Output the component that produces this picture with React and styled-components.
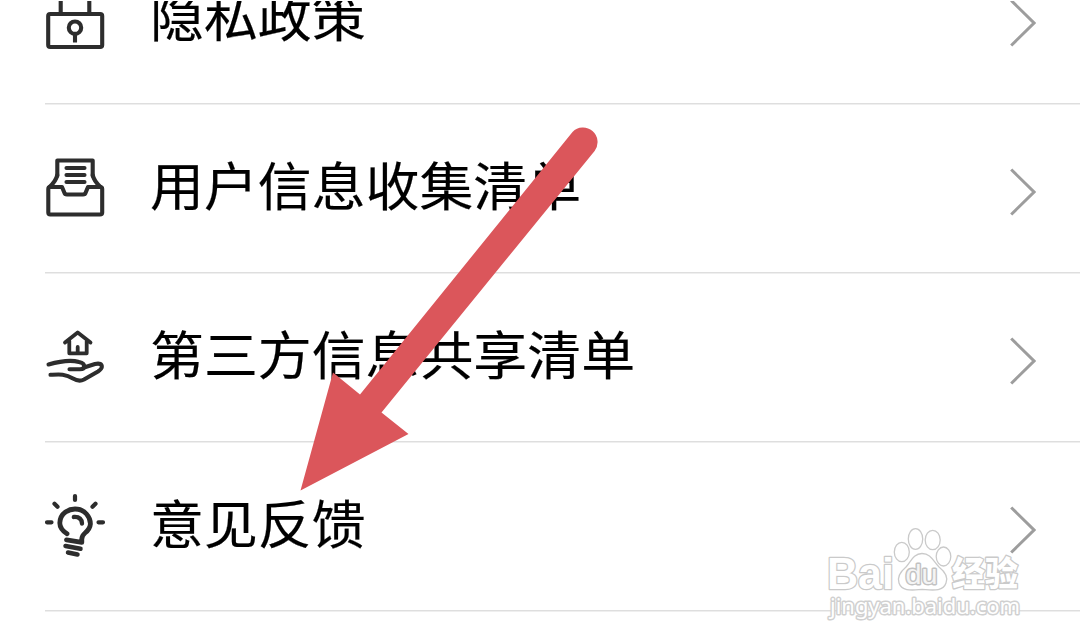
import React from "react";
import styled, { createGlobalStyle } from "styled-components";

const GlobalStyle = createGlobalStyle`
  html, body { margin: 0; background: #fff; }
  body { font-family: "Noto Sans CJK SC", sans-serif; }
`;

const Screen = styled.main`
  position: relative;
  box-sizing: border-box;
  width: 1080px;
  height: 644px;
  padding-top: 1px;
  background: #fff;
  overflow: hidden;
`;

const Viewport = styled.div`
  height: 643px;
  overflow: hidden;
`;

const List = styled.ul`
  list-style: none;
  margin: -65px 0 0;
  padding: 0 0 0 45px;
`;

const Row = styled.li`
  box-sizing: border-box;
  display: flex;
  align-items: center;
  height: 169px;
  padding-right: 44px;
  border-bottom: 1px solid #efefef;
  box-shadow: inset 0 -1px #dedede;
`;

const Icon = styled.svg`
  flex: none;
  width: 60px;
  height: 72px;
  margin: 0 45px 2px 0;
  overflow: visible;
  fill: none;
  stroke: #2d2d2d;
  stroke-width: 4.1;
  stroke-linejoin: round;
  stroke-linecap: round;
`;

const Label = styled.span`
  flex: 1;
  margin-bottom: 10px;
  font-size: 53.9px;
  line-height: 80px;
  color: #000;
  -webkit-text-stroke: 0.2px #000;
  white-space: nowrap;
  transform: scaleY(0.96);
`;

const Chevron = styled.svg`
  flex: none;
  width: 26px;
  height: 48px;
  margin-top: 6px;
  fill: none;
  stroke: #9d9d9d;
  stroke-width: 3;
`;

const Arrow = styled.svg`
  position: absolute;
  left: 290px;
  top: 120px;
  width: 320px;
  height: 380px;
  fill: #db565b;
`;

const Watermark = styled.svg`
  position: absolute;
  left: 820px;
  top: 520px;
  width: 210px;
  height: 110px;
  fill: #fff;
  stroke: #cacaca;
  stroke-width: 1.3;
`;

const LatinMark = styled.text`
  font-family: "Liberation Sans", sans-serif;
  font-weight: 700;
  paint-order: stroke;
  stroke-width: 2.6;
  stroke-linejoin: round;
`;

const PawMark = styled(LatinMark)`
  font-weight: 400;
  fill: #f4f4f4;
  stroke: #c2c2c2;
  stroke-width: 2.8;
`;

const HanMark = styled(LatinMark)`
  font-family: "Noto Sans CJK SC", sans-serif;
  font-weight: 900;
`;

const UrlMark = styled(LatinMark)`
  font-family: "Noto Sans", sans-serif;
  font-weight: 400;
  stroke: #d0d0d0;
  stroke-width: 3;
`;

const LockIcon = () => (
  <>
    <rect x="3.2" y="31" width="54" height="33" rx="2" />
    <path d="M15.7 31V8H44.3V31" />
    <circle cx="30" cy="44.7" r="6.2" />
    <path d="M30 51v8.5" strokeLinecap="butt" />
  </>
);

const TrayIcon = () => (
  <>
    <path d="M12.3 24V8.5H47.7V24" />
    <path d="M12.3 23Q11 29 4.5 35M47.7 23Q49 29 55.5 35" />
    <path d="M5 35H17L19.3 40.5Q19.8 42.5 22 42.5H38Q40.2 42.5 40.7 40.5L43 35H55Q57.2 35 57.2 37V60.5Q57.2 62.5 55 62.5H5.2Q3.3 62.5 3.3 60.5V37Q3.3 35 5 35Z" />
    <path d="M21.5 16H39.5M21.5 23H39.5M21.5 30H39.5" />
  </>
);

const HandHouseIcon = () => (
  <>
    <path d="M20 21.5L32.7 11.5L45.5 21.5M24.3 20V32.3H41.7V20M32.7 31V26" strokeWidth="3.8" />
    <path d="M3.5 43.5C14 40.5 25 38.5 34 41Q39.5 42 39 45.5Q39 48.3 35 48.3H24.5" />
    <path d="M39 46.5L50 43Q57 41.5 56.8 46Q56.7 48 53 50.5L39 58.5Q34 61.2 28 57.5C20 52.5 14 53.3 5.5 53.8" />
  </>
);

const BulbIcon = () => (
  <>
    <path d="M22 43.8C17 40.5 14.8 37 14.8 33Q15 26 20.5 22Q25 19 30 19Q37 19 41.5 24Q45.5 28.5 45.4 34Q45 39 40 43Q37 45.5 36.8 49V52.4L21.5 49.8" strokeWidth="4.8" />
    <path d="M28.8 27Q36.5 26.5 37 33.5" strokeWidth="4.3" />
    <path d="M20.5 56L35.5 58.8M23 62.5L32.5 64.5" strokeWidth="4.5" />
    <path d="M30 6V10M9.5 13.8L12.5 16.8M50.5 13.8L47.5 16.8M2 32.3H6.5M53.5 32.3H58" strokeWidth="4.2" />
  </>
);

const items = [
  { label: "隐私政策", Glyph: LockIcon },
  { label: "用户信息收集清单", Glyph: TrayIcon },
  { label: "第三方信息共享清单", Glyph: HandHouseIcon },
  { label: "意见反馈", Glyph: BulbIcon },
];

export default function App() {
  return (
    <Screen>
      <GlobalStyle />
      <Viewport>
        <List>
          {items.map(({ label, Glyph }) => (
            <Row key={label}>
              <Icon viewBox="0 0 60 72"><Glyph /></Icon>
              <Label>{label}</Label>
              <Chevron viewBox="0 0 26 48"><path d="M1.2 1.5L24 24L1.2 46.5" /></Chevron>
            </Row>
          ))}
        </List>
      </Viewport>
      <Arrow viewBox="290 120 320 380">
        <path d="M572.5 132A14.6 14.6 0 0 1 594.6 151L381.5 412.5L408.5 434L300.5 490.5L333 372.5L360 394.5Z" />
      </Arrow>
      <Watermark viewBox="820 520 210 110">
        <LatinMark x="827" y="588.5" fontSize="44" textLength="67" lengthAdjust="spacingAndGlyphs">Bai</LatinMark>
        <ellipse cx="901.8" cy="552" rx="7.5" ry="9.7" />
        <ellipse cx="915.5" cy="539" rx="7.2" ry="10.3" />
        <ellipse cx="932.7" cy="540" rx="7.5" ry="9.7" />
        <ellipse cx="943.5" cy="556.5" rx="7.3" ry="9.5" />
        <path d="M922 553.5C914 553.5 911 561 906 567C900 572 897 577 899 583C902 592 913 590 922 589.5C932 590 943 592 946 583C949 576 944 571 939 567C933 561 931 553.5 922 553.5Z" />
        <PawMark x="905.5" y="583.5" fontSize="27" textLength="32" lengthAdjust="spacingAndGlyphs">du</PawMark>
        <HanMark x="952" y="586" fontSize="34" textLength="66" lengthAdjust="spacingAndGlyphs">经验</HanMark>
        <UrlMark x="830" y="614" fontSize="22" textLength="190" lengthAdjust="spacingAndGlyphs">jingyan.baidu.com</UrlMark>
      </Watermark>
    </Screen>
  );
}
